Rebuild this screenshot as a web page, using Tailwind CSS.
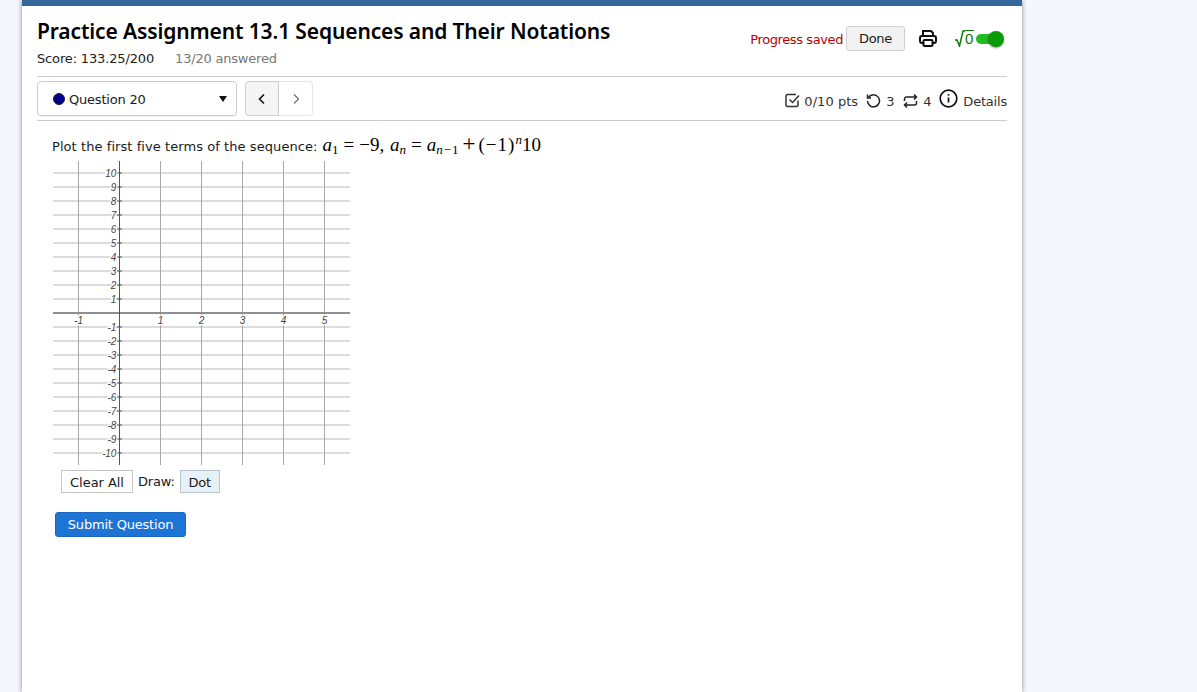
<!DOCTYPE html>
<html><head><meta charset="utf-8"><title>Practice Assignment</title>
<script src="https://cdn.jsdelivr.net/npm/@tailwindcss/browser@4"></script></head>
<body class="bg-[#f5f7ff] h-[692px] overflow-hidden font-['DejaVu_Sans',sans-serif] text-[13px] tracking-[-0.2px] text-[#1a1a1a]">
<div class="ml-[22px] w-[1000px] h-[692px] bg-white border-t-[6px] border-[#336699] shadow-[0_0_5px_rgba(0,0,0,0.45)] px-[15px]">
  <div class="flex justify-between h-[70px]">
    <div>
      <h1 class="font-['Noto_Sans',sans-serif] text-[21px] leading-[26px] font-semibold text-black mt-[12px] tracking-[-0.13px] whitespace-nowrap">Practice Assignment 13.1 Sequences and Their Notations</h1>
      <div class="flex gap-[21px] mt-[7px] leading-[16px]"><span class="text-[#222] tracking-[-0.15px]">Score: 133.25/200</span><span class="text-[#777]">13/20 answered</span></div>
    </div>
    <div class="flex items-start pt-[20px] pr-[2px]">
      <span class="text-[#b30000] leading-[27px] mr-[3px] tracking-[-0.4px]">Progress saved</span>
      <button class="w-[59px] h-[25px] pt-[1px] bg-[#f2f2f2] border border-[#cfcfcf] rounded-[3px] text-[#1a1a1a] tracking-[-0.3px]">Done</button>
      <svg class="ml-[14px] mt-[3px]" width="18" height="18" viewBox="0 0 18 18" fill="none" stroke="#111" stroke-width="2"><path d="M4 7V2h8l2 2v3"/><rect x="1" y="7" width="16" height="7" rx="2"/><rect x="4.500" y="11" width="9" height="6" rx="1" fill="#fff"/></svg>
      <span class="ml-[18px] mt-[4px] flex items-start h-[18px] text-[#0a7a0a]"><svg width="10" height="17" viewBox="0 0 10 17" fill="none" stroke="#0a7a0a" stroke-width="1.500"><path d="M0 10h2l2.500 6L8 1h2"/></svg><span class="font-['Liberation_Sans',sans-serif] border-t-[1.500px] border-[#0a7a0a] text-[15px] leading-[15px] w-[9px] tracking-normal">0</span></span>
      <span class="relative block w-[29px] h-[20px] ml-[2px] mt-[3px]">
        <span class="absolute left-0 top-[5px] w-[24px] h-[10px] rounded-full bg-[#22bb22]"></span>
        <span class="absolute right-[1px] top-[2px] w-[16px] h-[16px] rounded-full bg-[#0a9a0a] shadow-[0_1px_2px_rgba(0,0,0,0.4)]"></span>
      </span>
    </div>
  </div>
  <div class="flex items-center justify-between h-[45px] border-y border-[#cccccc]">
    <div class="flex items-center">
      <div class="w-[200px] h-[35px] border border-[#cccccc] rounded-[4px] flex items-center pl-[15px] pr-[9px] shadow-[0_1px_1px_rgba(0,0,0,0.05)]">
        <span class="w-[12px] h-[12px] rounded-full bg-[#000090] border border-[#222] mr-[4px]"></span>
        <span class="flex-1 pt-[2px]">Question 20</span>
        <svg width="8" height="6" viewBox="0 0 8 6"><path d="M0 0h8L4 6z" fill="#111"/></svg>
      </div>
      <div class="flex ml-[8px] h-[35px]">
        <div class="w-[34px] border border-[#cccccc] rounded-l-[4px] bg-[#f5f5f5] flex items-center justify-center"><svg width="8" height="12" viewBox="0 0 8 12" fill="none" stroke="#111" stroke-width="1.600"><path d="M6 1.500L1.500 6 6 10.500"/></svg></div>
        <div class="w-[34px] border border-l-0 border-[#e5e5e5] rounded-r-[4px] flex items-center justify-center"><svg width="8" height="12" viewBox="0 0 8 12" fill="none" stroke="#777" stroke-width="1.400"><path d="M2 1.500L6.500 6 2 10.500"/></svg></div>
      </div>
    </div>
    <div class="flex items-center text-[#333] leading-[16px] mt-[6px]">
      <svg class="mr-[4px] -mt-[2px]" width="15" height="15" viewBox="0 0 15 15" fill="none" stroke="#333" stroke-width="1.500"><path d="M13 7.500V12a1.500 1.500 0 0 1-1.500 1.500h-9A1.500 1.500 0 0 1 1 12V3a1.500 1.500 0 0 1 1.500-1.500H11"/><path d="M4.500 6.500L7.500 9.500L14 2.500"/></svg>
      <span class="tracking-[0.05px]">0/10 pts</span>
      <svg class="ml-[8px] mr-[5px] -mt-[2px]" width="15" height="15" viewBox="0 0 15 15" fill="none" stroke="#222" stroke-width="1.500"><path d="M2.500 4.500A6 6 0 1 1 1.500 8"/><path d="M1.500 1.500v3.500h3.500"/></svg>
      <span>3</span>
      <svg class="ml-[9px] mr-[5px] -mt-[2px]" width="15" height="14" viewBox="0 0 15 14" fill="none" stroke="#222" stroke-width="1.500"><path d="M1.500 7V5a2 2 0 0 1 2-2h10M11 .5L13.500 3 11 5.500"/><path d="M13.500 7v2a2 2 0 0 1-2 2h-10M4 8.500L1.500 11 4 13.500"/></svg>
      <span>4</span>
      <svg class="ml-[8px] mr-[5px] -mt-[7px]" width="19" height="19" viewBox="0 0 19 19" fill="none" stroke="#111" stroke-width="1.700"><circle cx="9.500" cy="9.500" r="8.300"/><path d="M9.500 8.500v5"/><path d="M9.500 5v1.600"/></svg>
      <span>Details</span>
    </div>
  </div>
  <div class="pl-[15px] pt-[14px]">
    <p class="flex items-baseline h-[19px] leading-[19px] whitespace-nowrap"><span class="tracking-[0.07px]">Plot the first five terms of the sequence:</span>
      <span class="ml-[5px] font-['Liberation_Serif',serif] text-[19px] tracking-normal text-black"><i>a</i><span class="text-[13px] align-[-3px] leading-[0]">1</span><span class="mx-[5px]">=</span>−9, <i class="ml-[1px]">a</i><span class="text-[13px] align-[-3px] leading-[0]"><i>n</i></span><span class="mx-[5px]">=</span><i>a</i><span class="text-[13px] align-[-3px] leading-[0] tracking-[1px]"><i>n</i>−1</span><span class="ml-[3px] mr-[3px] text-[23px] leading-[0]">+</span><span class="tracking-[1px]">(−1)</span><span class="text-[13px] align-[7px] leading-[0]"><i>n</i></span>10</span></p>
    <svg class="block ml-0 mt-[6px]" width="300" height="306" viewBox="52 160 300 306" font-family="Liberation Sans, sans-serif" font-size="10" font-style="italic" fill="#444">
      <g stroke="#dcdcdc" stroke-width="2">
        <path d="M53 173H350M53 187H350M53 201H350M53 215H350M53 229H350M53 243H350M53 257H350M53 271H350M53 285H350M53 299H350M53 327H350M53 341H350M53 355H350M53 369H350M53 383H350M53 397H350M53 411H350M53 425H350M53 439H350M53 453H350"/>
      </g>
      <g stroke="#a8a8a8" stroke-width="1">
        <path d="M78.500 161V465M160.500 161V465M201.500 161V465M242.500 161V465M283.500 161V465M324.500 161V465"/>
      </g>
      <path d="M53 313H350" stroke="#8f8f8f" stroke-width="2"/>
      <path d="M119.500 161V465" stroke="#555" stroke-width="1"/>
      <path d="M117 173h5M117 187h5M117 201h5M117 215h5M117 229h5M117 243h5M117 257h5M117 271h5M117 285h5M117 299h5M117 327h5M117 341h5M117 355h5M117 369h5M117 383h5M117 397h5M117 411h5M117 425h5M117 439h5M117 453h5" stroke="#555" stroke-width="1"/>
      <g text-anchor="end" stroke="#fff" stroke-width="2.500" paint-order="stroke">
        <text x="116" y="176.500">10</text><text x="116" y="190.500">9</text><text x="116" y="204.500">8</text><text x="116" y="218.500">7</text><text x="116" y="232.500">6</text><text x="116" y="246.500">5</text><text x="116" y="260.500">4</text><text x="116" y="274.500">3</text><text x="116" y="288.500">2</text><text x="116" y="302.500">1</text>
        <text x="116" y="330.500">-1</text><text x="116" y="344.500">-2</text><text x="116" y="358.500">-3</text><text x="116" y="372.500">-4</text><text x="116" y="386.500">-5</text><text x="116" y="400.500">-6</text><text x="116" y="414.500">-7</text><text x="116" y="428.500">-8</text><text x="116" y="442.500">-9</text><text x="116" y="456.500">-10</text>
      </g>
      <g text-anchor="middle" stroke="#fff" stroke-width="2.500" paint-order="stroke">
        <text x="78.500" y="323.500">-1</text><text x="160.500" y="323.500">1</text><text x="201.500" y="323.500">2</text><text x="242.500" y="323.500">3</text><text x="283.500" y="323.500">4</text><text x="324.500" y="323.500">5</text>
      </g>
    </svg>
    <div class="flex items-center ml-[9px] mt-[3px] h-[24px]">
      <button class="w-[72px] h-[23px] pt-[2px] border border-[#c5c5c5] bg-white tracking-[-0.05px]">Clear All</button>
      <span class="ml-[5px] pt-[2px]">Draw:</span>
      <button class="ml-[5px] w-[40px] h-[23px] pt-[2px] border border-[#b8c4d0] bg-[#e8f0f8]">Dot</button>
    </div>
    <button class="block ml-[3px] mt-[19px] w-[131px] h-[25px] pt-[1px] rounded-[3px] bg-[#1c74d4] border border-[#1a68c0] text-white font-normal">Submit Question</button>
  </div>
</div>
</body></html>
